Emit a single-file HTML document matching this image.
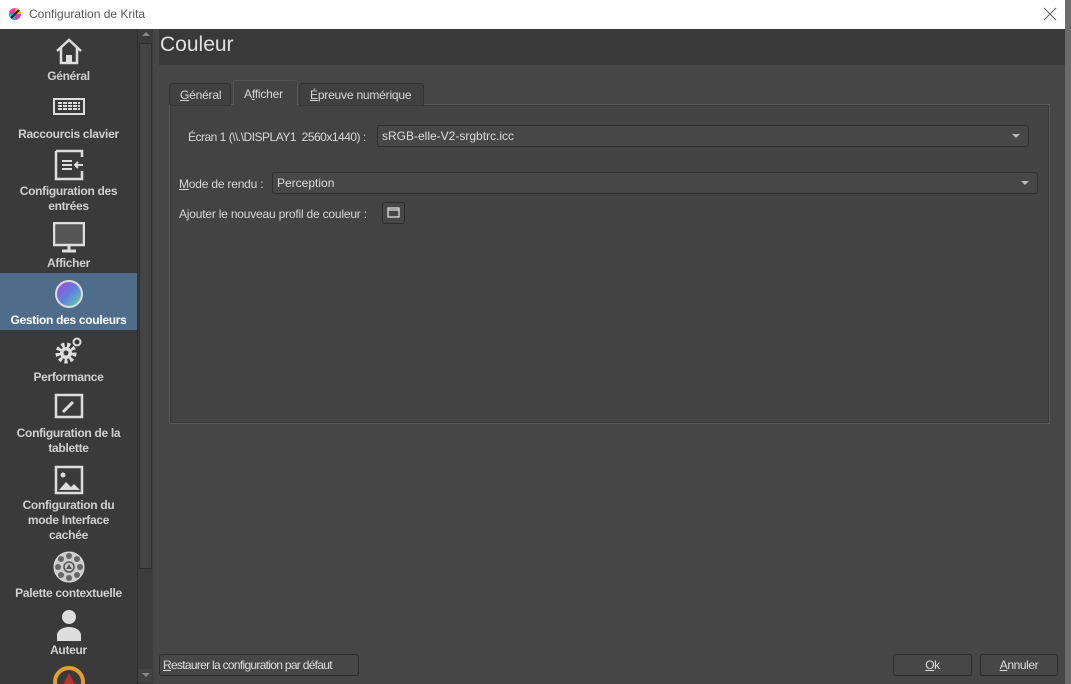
<!DOCTYPE html>
<html><head><meta charset="utf-8"><style>
*{box-sizing:border-box;margin:0;padding:0}
html,body{width:1071px;height:684px;overflow:hidden}
body{background:#6b6b6b;font-family:"Liberation Sans",sans-serif;position:relative}
#win{position:absolute;left:0;top:0;width:1065px;height:684px;background:#464646}
#title{position:absolute;left:0;top:0;width:1065px;height:29px;background:#fff;font-size:12px;color:#555}
#title span{position:absolute;left:29px;top:7px}
#side{position:absolute;left:0;top:29px;width:137px;height:655px;background:#3a3a3a;overflow:hidden}
.it{position:absolute;left:0;width:137px;text-align:center;color:#d0d0d0;font-weight:bold;font-size:12px;line-height:15px;letter-spacing:-0.3px}
.it svg{display:block;margin:0 auto}
#sb{position:absolute;left:137px;top:29px;width:16px;height:655px;background:#3c3c3c;border-left:1px solid #2e2e2e}
.abs{position:absolute}
.t{position:absolute;font-size:12px;color:#d8d8d8;white-space:nowrap;letter-spacing:-0.2px}
.combo{position:absolute;height:22px;background:#474747;border:1px solid #2f2f2f;border-radius:3px;font-size:12px;color:#ddd;padding:3px 4px;white-space:nowrap}
.combo:after{content:"";position:absolute;right:8px;top:8px;border:4px solid transparent;border-top:4px solid #bbb;border-bottom:0}
.btn{position:absolute;height:22px;background:#474747;border:1px solid #2c2c2c;border-radius:3px;font-size:12px;color:#ddd;text-align:center;line-height:20px;white-space:nowrap;overflow:hidden;letter-spacing:-0.4px}
</style></head><body>
<div id="win">
<div id="title"><svg class="abs" style="left:8px;top:7px" width="14" height="14"><circle cx="7" cy="7" r="6" fill="#e040a0"/><path d="M7 1a6 6 0 0 1 6 6H7z" fill="#f0c000"/><path d="M1 7a6 6 0 0 0 6 6V7z" fill="#30b0e0"/><path d="M3 11l8-8" stroke="#222" stroke-width="2"/></svg><span>Configuration de Krita</span>
<svg class="abs" style="left:1043px;top:7px" width="14" height="14"><path d="M1 1l12 12M13 1L1 13" stroke="#666" stroke-width="1.2"/></svg></div>
<div id="side">
<div class="it" style="top:7px"><svg width="30" height="30" viewBox="0 0 30 30"><path d="M3 15L15 4l12 11M7 12v15h16V12" fill="none" stroke="#ddd" stroke-width="2.5"/><rect x="12" y="19" width="6" height="8" fill="#ddd"/></svg><div style="margin-top:3px">Général</div></div>
<div class="it" style="top:68px"><svg width="32" height="20"><rect x="1" y="2" width="30" height="15" fill="none" stroke="#ddd" stroke-width="2"/><path d="M5 6h22M5 9h22M5 12h22" stroke="#ddd" stroke-width="2" stroke-dasharray="4 1"/></svg><div style="margin-top:10px">Raccourcis clavier</div></div>
<div class="it" style="top:120px"><svg width="32" height="32"><path d="M3 2h26v6M29 22v8H3V2" fill="none" stroke="#ddd" stroke-width="2.5"/><path d="M9 12h10M9 16h10M9 20h10M22 16h8M25 13l-3 3 3 3" stroke="#ddd" stroke-width="2" fill="none"/></svg><div style="margin-top:3px">Configuration des<br>entrées</div></div>
<div class="it" style="top:193px"><svg width="32" height="32"><rect x="1" y="1" width="30" height="22" fill="#555" stroke="#ddd" stroke-width="2.5"/><path d="M16 23v5M9 29h14" stroke="#ddd" stroke-width="3"/></svg><div style="margin-top:2px">Afficher</div></div>
<div class="it" style="top:244px;height:57px;background:#4f6d8a;padding-top:6px"><svg width="30" height="30"><defs><linearGradient id="g" x1="0" y1="0" x2="1" y2="1"><stop offset="0" stop-color="#b040d0"/><stop offset=".5" stop-color="#6080e0"/><stop offset="1" stop-color="#60e0a0"/></linearGradient></defs><circle cx="15" cy="15" r="13" fill="url(#g)" stroke="#ddd" stroke-width="2"/></svg><div style="margin-top:4px;color:#fff">Gestion des couleurs</div></div>
<div class="it" style="top:307px"><svg width="30" height="30"><circle cx="12" cy="17" r="8" fill="none" stroke="#ddd" stroke-width="5" stroke-dasharray="3 2.5"/><circle cx="12" cy="17" r="6" fill="#ddd"/><circle cx="12" cy="17" r="2.5" fill="#3a3a3a"/><circle cx="23" cy="6" r="3.5" fill="none" stroke="#ddd" stroke-width="2"/></svg><div style="margin-top:4px">Performance</div></div>
<div class="it" style="top:364px"><svg width="30" height="30"><rect x="2" y="2" width="26" height="22" fill="none" stroke="#ddd" stroke-width="2.5"/><path d="M9 19l10-10" stroke="#ddd" stroke-width="3"/></svg><div style="margin-top:3px">Configuration de la<br>tablette</div></div>
<div class="it" style="top:436px"><svg width="30" height="30"><rect x="2" y="2" width="26" height="26" fill="none" stroke="#ddd" stroke-width="2.5"/><circle cx="9" cy="10" r="2.5" fill="#ddd"/><path d="M5 25l7-8 5 5 3-3 6 6z" fill="#ddd"/></svg><div style="margin-top:3px">Configuration du<br>mode Interface<br>cachée</div></div>
<div class="it" style="top:521px"><svg width="34" height="34"><circle cx="17" cy="17" r="15" fill="#ccc" stroke="#ddd"/><g fill="#666"><circle cx="17" cy="6" r="3"/><circle cx="17" cy="28" r="3"/><circle cx="6" cy="17" r="3"/><circle cx="28" cy="17" r="3"/><circle cx="9" cy="9" r="3"/><circle cx="25" cy="9" r="3"/><circle cx="9" cy="25" r="3"/><circle cx="25" cy="25" r="3"/></g><circle cx="17" cy="17" r="5" fill="none" stroke="#555" stroke-width="1.5"/><path d="M14 19l3-5 3 5z" fill="#555"/></svg><div style="margin-top:2px">Palette contextuelle</div></div>
<div class="it" style="top:580px"><svg width="30" height="32"><circle cx="15" cy="8" r="7" fill="#ddd"/><path d="M3 32v-6a12 8 0 0 1 24 0v6z" fill="#ddd"/></svg><div style="margin-top:2px">Auteur</div></div>
<div class="it" style="top:636px"><svg width="34" height="30"><circle cx="17" cy="17" r="14" fill="none" stroke="#e0a030" stroke-width="4"/><path d="M17 8l-7 14h14z" fill="#c03030"/></svg></div>
</div>
<div id="sb"><div class="abs" style="left:4px;top:3px;border:4px solid transparent;border-bottom:4px solid #888;border-top:0"></div>
<div class="abs" style="left:1px;top:14px;width:13px;height:526px;background:#444;border:1px solid #2f2f2f"></div>
<div class="abs" style="left:1px;top:640px;width:13px;height:13px;background:#444"></div>
<div class="abs" style="left:4px;top:644px;border:4px solid transparent;border-top:4px solid #888;border-bottom:0"></div></div>
<div class="abs" style="left:159px;top:29px;width:906px;height:36px;background:#393939"></div>
<div class="t" style="left:160px;top:33px;font-size:21px;color:#e0e0e0;letter-spacing:0">Couleur</div>
<div class="abs" style="left:169px;top:104px;width:881px;height:320px;border:1px solid #5a5a5a;background:#434343;box-shadow:inset 0 0 0 1px #383838"></div>
<div class="abs" style="left:169px;top:83px;width:62px;height:22px;border:1px solid #333;border-bottom:none;background:#404040;border-radius:3px 3px 0 0"></div>
<div class="abs" style="left:233px;top:80px;width:65px;height:26px;border:1px solid #555;border-bottom:none;background:#434343;border-radius:3px 3px 0 0"></div>
<div class="abs" style="left:299px;top:83px;width:125px;height:22px;border:1px solid #333;border-bottom:none;background:#404040;border-radius:3px 3px 0 0"></div>
<div class="t" style="left:180px;top:88px"><u>G</u>énéral</div>
<div class="t" style="left:244px;top:87px">A<u>f</u>ficher</div>
<div class="t" style="left:310px;top:88px"><u>É</u>preuve numérique</div>
<div class="t" style="left:188px;top:130px;letter-spacing:-0.5px">Écran 1 (\\.\DISPLAY1&nbsp; 2560x1440) :</div>
<div class="combo" style="left:377px;top:125px;width:652px">sRGB-elle-V2-srgbtrc.icc</div>
<div class="t" style="left:179px;top:177px"><u>M</u>ode de rendu :</div>
<div class="combo" style="left:272px;top:172px;width:766px">Perception</div>
<div class="t" style="left:179px;top:207px">Ajouter le nouveau profil de couleur :</div>
<div class="btn" style="left:382px;top:202px;width:23px"><svg width="13" height="11" style="margin-top:4px"><rect x="1" y="1" width="11" height="9" fill="none" stroke="#ddd" stroke-width="1.3"/><path d="M1 3h11" stroke="#ddd" stroke-width="1.3"/></svg></div>
<div class="btn" style="left:159px;top:654px;width:200px;text-align:left;padding-left:3px;letter-spacing:-0.7px"><u>R</u>estaurer la configuration par défaut</div>
<div class="btn" style="left:893px;top:654px;width:79px"><u>O</u>k</div>
<div class="btn" style="left:980px;top:654px;width:78px"><u>A</u>nnuler</div>
</div>
</body></html>
